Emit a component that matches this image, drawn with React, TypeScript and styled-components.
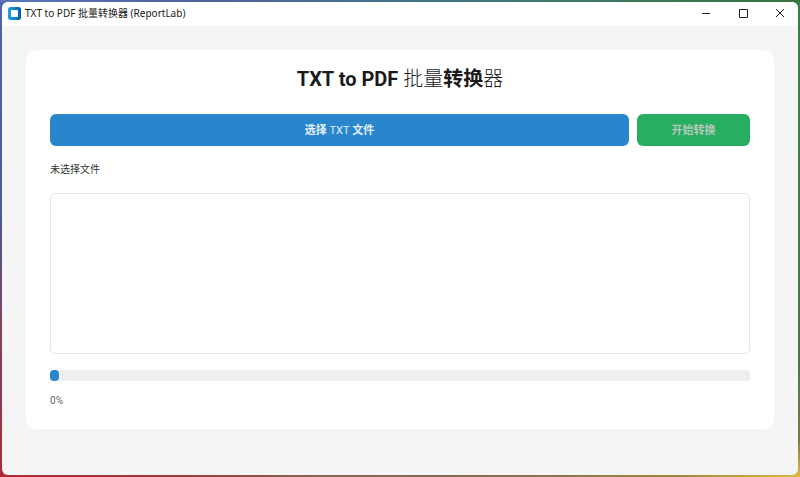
import React, { useState } from "react";
import styled, { createGlobalStyle } from "styled-components";

const GlobalStyle = createGlobalStyle`
  * { box-sizing: border-box; }
  body { margin: 0; font-family: Roboto, "Noto Sans CJK SC", sans-serif; color: #222; }
`;

const Desktop = styled.div`
  min-height: 100vh;
  padding: 2px;
  display: flex;
  background:
    linear-gradient(90deg, #5a78b8, #4f629a 25%, #43738c 50%, #3f7860 75%, #357540) top / 100% 2px no-repeat,
    linear-gradient(90deg, #b02a35, #9c3a42 22%, #866452 40%, #857055 65%, #a08838 85%, #e0b840) bottom / 100% 2px no-repeat,
    linear-gradient(180deg, #4a68ac, #4c5a98 45%, #7a4468 65%, #b02a35) left / 50% 100% no-repeat,
    linear-gradient(180deg, #35804a, #4a7550 75%, #7a7a45 92%, #e0b840) right / 50% 100% no-repeat;
`;

const Window = styled.div`
  flex: 1;
  display: flex;
  flex-direction: column;
  border-radius: 6px;
  overflow: hidden;
  background: #f5f5f5;
`;

const TitleBar = styled.header`
  height: 24px;
  padding: 0 0 2px 6px;
  display: flex;
  align-items: center;
  gap: 4px;
  background: #fff;
`;

const WindowTitle = styled.span`
  flex: 1;
  font: 10px/14px "Noto Sans", "Noto Sans CJK SC", sans-serif;
  color: #1a1a1a;
`;

const Controls = styled.div`
  display: flex;
`;

const WindowButton = styled.button`
  width: 37px;
  height: 22px;
  padding: 0;
  border: 0;
  background: none;
  display: grid;
  place-items: center;
`;

const Card = styled.main`
  margin: 24px 24px 0;
  padding: 17px 24px 20px;
  border-radius: 10px;
  background: #fff;
`;

const Heading = styled.h1`
  margin: 0 0 23px;
  font-size: 20px;
  line-height: 24px;
  font-weight: 700;
  text-align: center;
  color: #1b1b1b;
`;

const LightGlyphs = styled.span`
  font-weight: 300;
`;

const Actions = styled.div`
  display: flex;
  gap: 8px;
`;

const ActionButton = styled.button<{ $tone: "primary" | "success" }>`
  ${({ $tone }) =>
    $tone === "primary"
      ? "flex: 1; background: #2986cc; color: #e6f0f8;"
      : "width: 113px; background: #27ae60; color: #b4c8ba;"}
  height: 32px;
  padding: 2px 0 0;
  border: 0;
  border-radius: 6px;
  font: 700 11px/16px Roboto, "Noto Sans CJK SC", sans-serif;
`;

const Regular = styled.span`
  font-weight: 400;
`;

const Status = styled.p`
  margin: 16px 0 15px;
  font-size: 10px;
  line-height: 16px;
  color: #333;
`;

const Log = styled.textarea`
  display: block;
  width: 100%;
  height: 161px;
  border: 1px solid #e4e4e4;
  border-radius: 5px;
  background: #fff;
  resize: none;
  outline: none;
`;

const Track = styled.div`
  height: 11px;
  margin-top: 16px;
  border-radius: 3px;
  background: #eee;
`;

const Fill = styled.div`
  min-width: 9px;
  height: 11px;
  border-radius: 4px;
  background: #2986cc;
`;

const Percent = styled.p`
  margin: 12px 0 0;
  font-size: 10px;
  line-height: 16px;
  color: #666;
`;

const AppIcon = () => (
  <svg width="13" height="13" viewBox="0 0 13 13" aria-hidden="true">
    <defs>
      <linearGradient id="app-blue" x1="0" y1="0" x2="1" y2="0">
        <stop offset="0" stopColor="#1fa4e6" />
        <stop offset="0.6" stopColor="#1080c8" />
        <stop offset="1" stopColor="#06599c" />
      </linearGradient>
    </defs>
    <rect width="13" height="13" rx="2.5" fill="url(#app-blue)" />
    <rect x="3" y="3" width="7" height="7" rx="1" fill="#fff" />
  </svg>
);

const controls = [
  { label: "最小化", path: "M1 5.5H9" },
  { label: "最大化", path: "M1.5 1.5H9.5V9.5H1.5Z" },
  { label: "关闭", path: "M1 1L9 9M9 1L1 9" },
];

export default function App() {
  const [log, setLog] = useState("");
  const progress = 0;
  return (
    <>
      <GlobalStyle />
      <Desktop>
        <Window>
          <TitleBar>
            <AppIcon />
            <WindowTitle>TXT to PDF 批量转换器 (ReportLab)</WindowTitle>
            <Controls>
              {controls.map((c) => (
                <WindowButton key={c.label} type="button" aria-label={c.label}>
                  <svg width="10" height="10" viewBox="0 0 10 10" fill="none" stroke="#222">
                    <path d={c.path} />
                  </svg>
                </WindowButton>
              ))}
            </Controls>
          </TitleBar>
          <Card>
            <Heading>
              TXT to PDF <LightGlyphs>批量</LightGlyphs>转换<LightGlyphs>器</LightGlyphs>
            </Heading>
            <Actions>
              <ActionButton type="button" $tone="primary">
                选择 <Regular>TXT</Regular> 文件
              </ActionButton>
              <ActionButton type="button" $tone="success">
                开始转换
              </ActionButton>
            </Actions>
            <Status>未选择文件</Status>
            <Log aria-label="转换日志" value={log} onChange={(e) => setLog(e.target.value)} />
            <Track
              role="progressbar"
              aria-label="转换进度"
              aria-valuemin={0}
              aria-valuemax={100}
              aria-valuenow={progress}
            >
              <Fill style={{ width: `${progress}%` }} />
            </Track>
            <Percent>{progress}%</Percent>
          </Card>
        </Window>
      </Desktop>
    </>
  );
}
